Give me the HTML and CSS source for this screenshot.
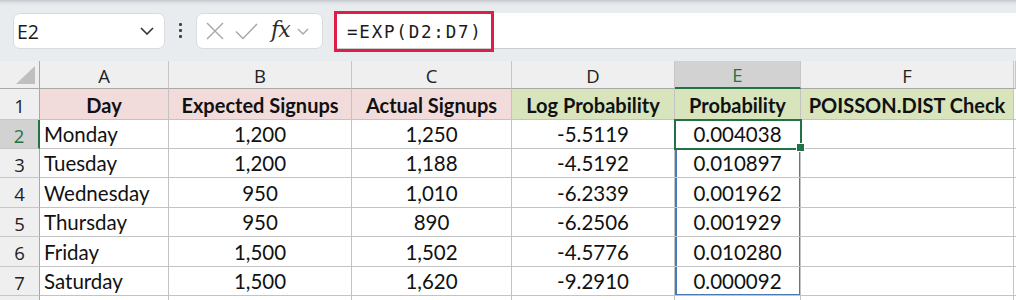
FILE: index.html
```html
<!DOCTYPE html>
<html lang="en">
<head>
    <meta charset="UTF-8">
    <title>Poisson Probability - Sheet</title>
    <link rel="stylesheet" href="styles.css">
</head>
<body>
    <div class="formula-bar">
        <div class="name-box">
            <span>E2</span>
            <svg class="chev dark" width="14" height="8" viewBox="0 0 14 8"><path d="M1 1l6 6 6-6" fill="none" stroke="#333" stroke-width="1.6"/></svg>
        </div>
        <div class="grip"><i></i><i></i><i></i></div>
        <div class="fx-box">
            <svg width="18" height="18" viewBox="0 0 18 18"><path d="M1 1l16 16M17 1L1 17" stroke="#a6a6a6" stroke-width="1.4"/></svg>
            <svg width="23" height="17" viewBox="0 0 23 17"><path d="M1 8.5l7 7L22 1" fill="none" stroke="#a6a6a6" stroke-width="1.4"/></svg>
            <span class="fx">fx</span>
            <svg class="chev" width="12" height="7" viewBox="0 0 12 7"><path d="M1 1l5 5 5-5" fill="none" stroke="#a6a6a6" stroke-width="1.4"/></svg>
        </div>
        <div class="formula-input">
            <span class="formula-text">=EXP(D2:D7)</span>
        </div>
    </div>

    <div class="sheet">
        <div class="hdr corner"><span class="tri"></span></div>
        <div class="hdr col">A</div>
        <div class="hdr col">B</div>
        <div class="hdr col">C</div>
        <div class="hdr col">D</div>
        <div class="hdr col on">E</div>
        <div class="hdr col">F</div>
        <div class="hdr col last"></div>

        <div class="hdr row">1</div>
        <div class="cell head pink">Day</div>
        <div class="cell head pink">Expected Signups</div>
        <div class="cell head pink">Actual Signups</div>
        <div class="cell head green">Log Probability</div>
        <div class="cell head green">Probability</div>
        <div class="cell head green">POISSON.DIST Check</div>
        <div class="cell last"></div>

        <div class="hdr row on">2</div>
        <div class="cell left">Monday</div>
        <div class="cell">1,200</div>
        <div class="cell">1,250</div>
        <div class="cell">-5.5119</div>
        <div class="cell active">0.004038</div>
        <div class="cell"></div>
        <div class="cell last"></div>

        <div class="hdr row">3</div>
        <div class="cell left">Tuesday</div>
        <div class="cell">1,200</div>
        <div class="cell">1,188</div>
        <div class="cell">-4.5192</div>
        <div class="cell range">0.010897</div>
        <div class="cell"></div>
        <div class="cell last"></div>

        <div class="hdr row">4</div>
        <div class="cell left">Wednesday</div>
        <div class="cell">950</div>
        <div class="cell">1,010</div>
        <div class="cell">-6.2339</div>
        <div class="cell range">0.001962</div>
        <div class="cell"></div>
        <div class="cell last"></div>

        <div class="hdr row">5</div>
        <div class="cell left">Thursday</div>
        <div class="cell">950</div>
        <div class="cell">890</div>
        <div class="cell">-6.2506</div>
        <div class="cell range">0.001929</div>
        <div class="cell"></div>
        <div class="cell last"></div>

        <div class="hdr row">6</div>
        <div class="cell left">Friday</div>
        <div class="cell">1,500</div>
        <div class="cell">1,502</div>
        <div class="cell">-4.5776</div>
        <div class="cell range">0.010280</div>
        <div class="cell"></div>
        <div class="cell last"></div>

        <div class="hdr row">7</div>
        <div class="cell left">Saturday</div>
        <div class="cell">1,500</div>
        <div class="cell">1,620</div>
        <div class="cell">-9.2910</div>
        <div class="cell range end">0.000092</div>
        <div class="cell"></div>
        <div class="cell last"></div>

        <div class="hdr row tail"></div>
        <div class="cell tail"></div>
        <div class="cell tail"></div>
        <div class="cell tail"></div>
        <div class="cell tail"></div>
        <div class="cell tail"></div>
        <div class="cell tail"></div>
        <div class="cell tail last"></div>
    </div>
</body>
</html>
```

FILE: styles.css
```css
body {
    margin: 0;
    padding: 0;
    width: 1016px;
    height: 300px;
    overflow: hidden;
    background-color: #ffffff;
    font-family: 'Lato', 'Open Sans', sans-serif;
    color: #111;
}

/* formula bar */
.formula-bar {
    display: flex;
    align-items: flex-start;
    height: 61px;
    box-sizing: border-box;
    padding-top: 13px;
    background: linear-gradient(to bottom, #c4c7cb 0px, #dfe2e6 3px, #e9ecef 6px);
}
.name-box,
.fx-box {
    display: flex;
    align-items: center;
    height: 36px;
    box-sizing: border-box;
    background-color: #fff;
    border: 1px solid #d9dbde;
    border-radius: 7px;
}
.name-box {
    width: 152px;
    margin-left: 13px;
    padding: 0 10px 0 3px;
    justify-content: space-between;
    font-family: 'Open Sans', sans-serif;
    font-size: 19.5px;
    color: #1a1a1a;
}
.grip {
    width: 31px;
    display: flex;
    flex-direction: column;
    align-items: center;
    gap: 3px;
    padding-top: 10px;
}
.grip i {
    width: 3px;
    height: 3px;
    background-color: #444;
    border-radius: 1px;
}
.fx-box {
    width: 127px;
    padding: 0 4px 0 9px;
    gap: 11px;
}
.fx-box .fx {
    font-family: 'DejaVu Serif', 'Liberation Serif', serif;
    font-style: italic;
    font-size: 22px;
    color: #2b2b2b;
    margin-left: 2px;
    margin-right: -4px;
    letter-spacing: -1px;
    line-height: 1;
    padding-bottom: 3px;
}
.formula-input {
    flex: 1;
    margin-left: 11px;
    height: 36px;
    box-sizing: border-box;
    background-color: #fff;
    border-bottom: 1px solid #c9cbce;
    display: flex;
    align-items: center;
}
.formula-text {
    width: 160px;
    height: 41px;
    box-sizing: border-box;
    margin: 0 0 -2px 0;
    border: 3px solid #db1f48;
    padding-left: 10px;
    display: flex;
    align-items: center;
    font-family: 'DejaVu Sans Mono', monospace;
    font-size: 17.5px;
    letter-spacing: 1.8px;
    color: #1a1a1a;
}

/* grid */
.sheet {
    display: grid;
    grid-template-columns: 40px 129px 183px 160px 163px 126px 213px 2px;
    grid-template-rows: 28px 31px 29px 29px 30px 29px 30px 29px 4px;
}
.hdr {
    background-color: #efefef;
    font-family: 'Open Sans', sans-serif;
    font-size: 18.5px;
    color: #222;
    display: flex;
    align-items: center;
    justify-content: center;
    box-sizing: border-box;
}
.hdr.col {
    border-right: 1px solid #c6c6c6;
    border-bottom: 1px solid #a8a8a8;
    padding-top: 1px;
}
.hdr.row {
    border-right: 1px solid #a8a8a8;
    border-bottom: 1px solid #c6c6c6;
    padding-top: 2px;
}
.hdr.on {
    background-color: #d2d2d2;
    color: #217346;
}
.hdr.col.on {
    border-bottom: 2px solid #217346;
}
.hdr.row.on {
    border-right: 2px solid #217346;
}
.corner {
    position: relative;
    border-right: 1px solid #a8a8a8;
    border-bottom: 1px solid #a8a8a8;
}
.corner .tri {
    position: absolute;
    right: 4px;
    bottom: 4px;
    width: 0;
    height: 0;
    border-left: 19px solid transparent;
    border-bottom: 18px solid #bfbfbf;
}

.cell {
    display: flex;
    align-items: flex-end;
    justify-content: center;
    padding-bottom: 1px;
    box-sizing: border-box;
    border-right: 1px solid #c3c3c3;
    border-bottom: 1px solid #c3c3c3;
    font-size: 20.5px;
    line-height: 1.2;
    white-space: nowrap;
    position: relative;
}
.cell.left {
    justify-content: flex-start;
    padding-left: 4px;
}
.cell.head {
    font-weight: 700;
    font-size: 20px;
    padding-bottom: 2px;
}
.cell.pink {
    background-color: #f2dcdb;
}
.cell.green {
    background-color: #d8e4bc;
}
.cell.last {
    border-right: none;
}
.cell.tail,
.hdr.tail {
    border-bottom: none;
}
.cell.active {
    outline: 2px solid #217346;
    outline-offset: -1px;
    z-index: 2;
}
.cell.active::after {
    content: "";
    position: absolute;
    right: -5px;
    bottom: -4px;
    width: 7px;
    height: 7px;
    background-color: #217346;
    border: 1px solid #fff;
}
.cell.range {
    box-shadow: inset 2px 0 #4a78b8, inset -1px 0 #4a78b8;
}
.cell.range.end {
    box-shadow: inset 2px 0 #4a78b8, inset -1px 0 #4a78b8, inset 0 -1px #4a78b8;
}
```
